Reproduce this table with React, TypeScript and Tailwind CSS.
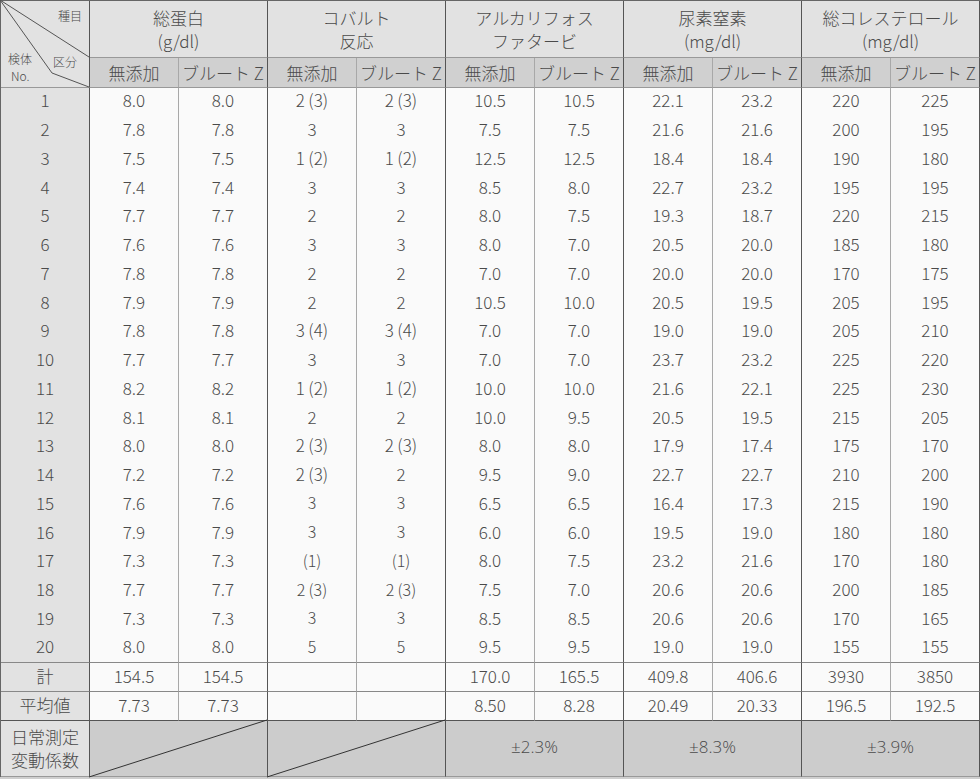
import React from 'react'

type Row = { no: string; v: string[] }

const rows: Row[] = [
  { no: '1', v: ['8.0', '8.0', '2\u2009(3)', '2\u2009(3)', '10.5', '10.5', '22.1', '23.2', '220', '225'] },
  { no: '2', v: ['7.8', '7.8', '3', '3', '7.5', '7.5', '21.6', '21.6', '200', '195'] },
  { no: '3', v: ['7.5', '7.5', '1\u2009(2)', '1\u2009(2)', '12.5', '12.5', '18.4', '18.4', '190', '180'] },
  { no: '4', v: ['7.4', '7.4', '3', '3', '8.5', '8.0', '22.7', '23.2', '195', '195'] },
  { no: '5', v: ['7.7', '7.7', '2', '2', '8.0', '7.5', '19.3', '18.7', '220', '215'] },
  { no: '6', v: ['7.6', '7.6', '3', '3', '8.0', '7.0', '20.5', '20.0', '185', '180'] },
  { no: '7', v: ['7.8', '7.8', '2', '2', '7.0', '7.0', '20.0', '20.0', '170', '175'] },
  { no: '8', v: ['7.9', '7.9', '2', '2', '10.5', '10.0', '20.5', '19.5', '205', '195'] },
  { no: '9', v: ['7.8', '7.8', '3\u2009(4)', '3\u2009(4)', '7.0', '7.0', '19.0', '19.0', '205', '210'] },
  { no: '10', v: ['7.7', '7.7', '3', '3', '7.0', '7.0', '23.7', '23.2', '225', '220'] },
  { no: '11', v: ['8.2', '8.2', '1\u2009(2)', '1\u2009(2)', '10.0', '10.0', '21.6', '22.1', '225', '230'] },
  { no: '12', v: ['8.1', '8.1', '2', '2', '10.0', '9.5', '20.5', '19.5', '215', '205'] },
  { no: '13', v: ['8.0', '8.0', '2\u2009(3)', '2\u2009(3)', '8.0', '8.0', '17.9', '17.4', '175', '170'] },
  { no: '14', v: ['7.2', '7.2', '2\u2009(3)', '2', '9.5', '9.0', '22.7', '22.7', '210', '200'] },
  { no: '15', v: ['7.6', '7.6', '3', '3', '6.5', '6.5', '16.4', '17.3', '215', '190'] },
  { no: '16', v: ['7.9', '7.9', '3', '3', '6.0', '6.0', '19.5', '19.0', '180', '180'] },
  { no: '17', v: ['7.3', '7.3', '(1)', '(1)', '8.0', '7.5', '23.2', '21.6', '170', '180'] },
  { no: '18', v: ['7.7', '7.7', '2\u2009(3)', '2\u2009(3)', '7.5', '7.0', '20.6', '20.6', '200', '185'] },
  { no: '19', v: ['7.3', '7.3', '3', '3', '8.5', '8.5', '20.6', '20.6', '170', '165'] },
  { no: '20', v: ['8.0', '8.0', '5', '5', '9.5', '9.5', '19.0', '19.0', '155', '155'] },
]

const totals = ['154.5', '154.5', '', '', '170.0', '165.5', '409.8', '406.6', '3930', '3850']
const averages = ['7.73', '7.73', '', '', '8.50', '8.28', '20.49', '20.33', '196.5', '192.5']

const groups = [
  ['総蛋白', '(g/dl)'],
  ['コバルト', '反応'],
  ['アルカリフォス', 'ファタービ'],
  ['尿素窒素', '(mg/dl)'],
  ['総コレステロール', '(mg/dl)'],
]

// right border: dark between groups, light inside a group
const sideBorder = (i: number) => (i % 2 === 1 ? 'border-r-[#555]' : 'border-r-[#a8a8a8]')

const Slash = () => (
  <svg className="absolute inset-0 h-full w-full overflow-visible" viewBox="0 0 177 55" preserveAspectRatio="none">
    <line x1="-1" y1="56" x2="177" y2="-1" stroke="#333" strokeWidth="1" />
  </svg>
)

export default function App() {
  return (
    <div
      className="w-[980px] bg-[#cfcfcf] font-light text-[#4a4a4a]"
      style={{ fontFamily: '"Noto Sans CJK JP", "Noto Sans", sans-serif' }}
    >
      <div className="grid grid-cols-[repeat(11,89px)] grid-rows-[57px_30px_repeat(20,28.75px)_29px_29px_56px] border-l border-t border-[#666] text-[17px] leading-none">
        {/* corner */}
        <div className="relative row-span-2 border-r border-b border-r-[#555] border-b-[#999] bg-[#e2e2e2] text-[12px] leading-none">
          <svg className="absolute inset-0 h-full w-full overflow-visible" viewBox="0 0 88 86" preserveAspectRatio="none">
            <line x1="-1" y1="-1" x2="88" y2="56" stroke="#555" strokeWidth="1" />
            <polyline points="-1,-1 51,72 88,86" fill="none" stroke="#555" strokeWidth="1" />
          </svg>
          <span className="absolute left-[57px] top-[9px]">種目</span>
          <span className="absolute left-[52px] top-[55px]">区分</span>
          <span className="absolute left-[7px] top-[52px]">検体</span>
          <span className="absolute left-[10px] top-[69px]">No.</span>
        </div>

        {groups.map((g) => (
          <div
            key={g[0]}
            className="col-span-2 flex flex-col items-center justify-center border-r border-b border-r-[#555] border-b-[#999] bg-[#e2e2e2] leading-[23px]"
          >
            <span>{g[0]}</span>
            <span>{g[1]}</span>
          </div>
        ))}

        {groups.flatMap((g, i) =>
          ['無添加', 'ブルート Z'].map((s, j) => (
            <div
              key={g[0] + s}
              className={`flex items-center justify-center border-r border-b border-b-[#999] bg-[#d0d0d0] ${sideBorder(i * 2 + j)}`}
            >
              {s}
            </div>
          ))
        )}

        {rows.map((r, ri) => (
          <React.Fragment key={r.no}>
            <div
              className={`flex items-center justify-center border-r border-r-[#555] bg-[#e2e2e2] pb-[5px] ${ri === 19 ? 'border-b border-b-[#888]' : ''}`}
            >
              {r.no}
            </div>
            {r.v.map((val, ci) => (
              <div
                key={ci}
                className={`flex items-center justify-center border-r bg-[#fafafa] pb-[5px] ${sideBorder(ci)} ${ri === 19 ? 'border-b border-b-[#888]' : ''} ${ri >= 14 && (ci === 2 || ci === 3) ? 'text-[16px]' : ''}`}
              >
                {val}
              </div>
            ))}
          </React.Fragment>
        ))}

        {[
          ['計', totals],
          ['平均値', averages],
        ].map(([label, vals], ri) => (
          <React.Fragment key={label as string}>
            <div
              className={`flex items-center justify-center border-r border-b border-r-[#555] bg-[#e2e2e2] pb-[4px] ${ri === 1 ? 'border-b-[#555]' : 'border-b-[#888]'}`}
            >
              {label as string}
            </div>
            {(vals as string[]).map((val, ci) => (
              <div
                key={ci}
                className={`flex items-center justify-center border-r border-b bg-[#fafafa] pb-[4px] ${sideBorder(ci)} ${ri === 1 ? 'border-b-[#555]' : 'border-b-[#888]'}`}
              >
                {val}
              </div>
            ))}
          </React.Fragment>
        ))}

        <div className="flex flex-col items-center justify-center border-r border-b border-r-[#555] border-b-[#999] bg-[#e2e2e2] pb-[2px] leading-[23px]">
          <span>日常測定</span>
          <span>変動係数</span>
        </div>
        <div className="relative col-span-2 border-r border-b border-r-[#555] border-b-[#999] bg-[#cccccc]">
          <Slash />
        </div>
        <div className="relative col-span-2 border-r border-b border-r-[#555] border-b-[#999] bg-[#cccccc]">
          <Slash />
        </div>
        {['±2.3%', '±8.3%', '±3.9%'].map((p) => (
          <div
            key={p}
            className="col-span-2 flex items-center justify-center border-r border-b border-r-[#555] border-b-[#999] bg-[#cccccc] pb-[5px]"
          >
            <span className="font-['Open_Sans',sans-serif] text-[17px]">{p}</span>
          </div>
        ))}
      </div>
      <div className="h-[2px]" />
    </div>
  )
}
